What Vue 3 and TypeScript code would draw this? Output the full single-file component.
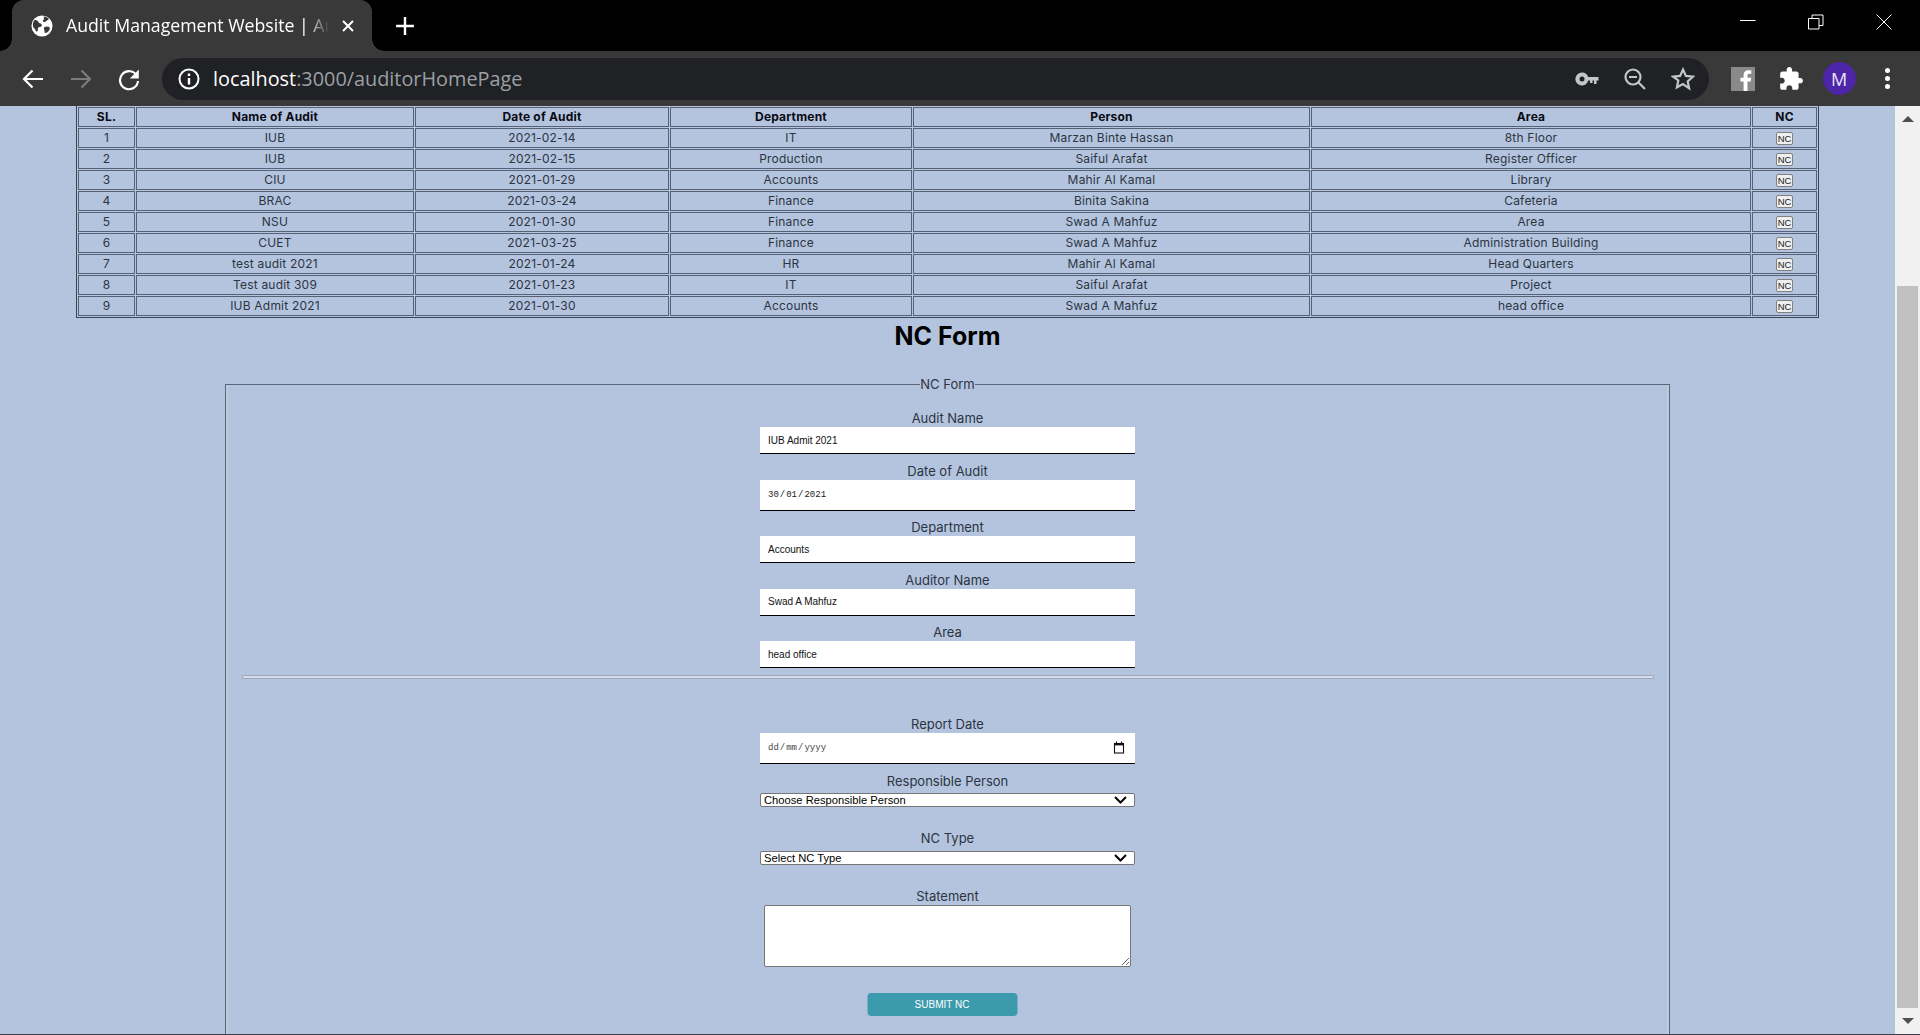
<template>
  <div class="window">
    <div class="tabstrip">
      <div class="tab">
        <svg class="favicon" viewBox="0 0 24 24">
          <circle cx="12" cy="12" r="11.5" fill="#fff" />
          <path fill="#38383a" d="M4 5.500c2 0 3.500.5 4 2s2.500 1 3.500 2.500-.5 3-2 3.200-2.200 1.300-2 3-1.500 2.500-2.200 1.200S4 14 2.500 13.500C1.500 10 2 7.500 4 5.500zM14 1.500c2 .3 4 1.200 5.500 2.800-.5 1.200-2 1.200-2.800 2.200s-2 1.500-3.200.8-.5-1.800.5-2.500-.5-1.500 0-3.300zM15 13c1.500-.8 3.500-.8 4.800.2s.7 2.800-.3 4-2.500 2.800-3.800 2.500-.7-2.200-1.200-3.500-.8-2.500.5-3.200z" />
        </svg>
        <span class="tab-title">Audit Management Website | Auditor Home</span>
        <svg class="tab-close" viewBox="0 0 14 14">
          <path d="M2 2l10 10M12 2L2 12" stroke="#fff" stroke-width="2" />
        </svg>
      </div>
      <svg class="new-tab" viewBox="0 0 18 18">
        <path d="M9 1v16M1 9h16" stroke="#fff" stroke-width="2.200" />
      </svg>
      <div class="win-controls">
        <div class="win-btn">
          <svg viewBox="0 0 16 16" width="16" height="16"><path d="M0 6.500h15.500" stroke="#fff" stroke-width="1" /></svg>
        </div>
        <div class="win-btn">
          <svg viewBox="0 0 16 16" width="16" height="16" fill="none" stroke="#fff">
            <path d="M.5 4.500h10.500v10.500H.5zM4 4.500V1h11v10.500h-4" />
          </svg>
        </div>
        <div class="win-btn">
          <svg viewBox="0 0 16 16" width="16" height="16"><path d="M.5.5l15 15M15.500.5l-15 15" stroke="#fff" /></svg>
        </div>
      </div>
    </div>

    <div class="toolbar">
      <div class="tool-btn">
        <svg viewBox="0 0 24 24" width="24" height="24" fill="none" stroke="#fff" stroke-width="2.200">
          <path d="M22 12H3M11.500 3.500L3 12l8.500 8.500" />
        </svg>
      </div>
      <div class="tool-btn">
        <svg viewBox="0 0 24 24" width="24" height="24" fill="none" stroke="#7b7b7b" stroke-width="2.200">
          <path d="M2 12h19M12.500 3.500L21 12l-8.500 8.500" />
        </svg>
      </div>
      <div class="tool-btn">
        <svg viewBox="0 0 24 24" width="24" height="24" fill="none" stroke="#fff" stroke-width="2.200">
          <path d="M20 9a9 9 0 1 0 1 5" />
          <path d="M21.800 2.500v9h-9z" fill="#fff" stroke="none" />
        </svg>
      </div>
      <div class="omnibox">
        <div class="tool-btn">
          <svg viewBox="0 0 24 24" width="24" height="24" fill="none" stroke="#fff" stroke-width="2">
            <circle cx="12" cy="12" r="9.500" />
            <path d="M12 11v6.500M12 6.500v2.500" stroke-width="2.400" />
          </svg>
        </div>
        <div class="url"><span class="url-host">localhost</span>:3000/auditorHomePage</div>
        <div class="tool-btn">
          <svg viewBox="0 0 24 24" width="24" height="24" fill="#c4c5c8">
            <path fill-rule="evenodd" d="M7 5.500a6.500 6.500 0 0 1 6.200 4.500H23.500v3.500h-2v3.500h-2.500v-3.500h-1.500v2.500H15v-2.500h-1.800A6.500 6.500 0 1 1 7 5.500zm0 4a2.500 2.500 0 1 0 0 5 2.500 2.500 0 0 0 0-5z" />
          </svg>
        </div>
        <div class="tool-btn">
          <svg viewBox="0 0 24 24" width="24" height="24" fill="none" stroke="#c4c5c8" stroke-width="2.200">
            <circle cx="10" cy="10" r="7.500" />
            <path d="M6 10h8M15.500 15.500L22 22" />
          </svg>
        </div>
        <div class="tool-btn">
          <svg viewBox="0 0 24 24" width="24" height="24" fill="none" stroke="#c4c5c8" stroke-width="2.200">
            <path d="M12 2.500l2.900 6.400 7 .8-5.200 4.700 1.400 6.900L12 17l-6.100 3.300 1.400-6.900L2.100 9.700l7-.8z" />
          </svg>
        </div>
      </div>
      <div class="extensions">
        <div class="tool-btn">
          <svg viewBox="0 0 24 24" width="24" height="24">
            <rect width="24" height="24" fill="#8a8a8a" />
            <path fill="#fff" d="M16.500 24v-9.500h3.200l.5-3.700h-3.700V8.500c0-1.100.3-1.800 1.800-1.800h2V3.400c-.4 0-1.500-.2-2.900-.2-2.900 0-4.800 1.700-4.800 4.900v2.700H9.400v3.700h3.200V24z" />
          </svg>
        </div>
        <div class="tool-btn">
          <svg viewBox="0 0 24 24" width="26" height="26" fill="#fff">
            <path d="M20.500 11H19V7c0-1.100-.9-2-2-2h-4V3.500C13 2.120 11.880 1 10.500 1S8 2.120 8 3.500V5H4c-1.100 0-1.990.9-1.990 2v3.800H3.500c1.490 0 2.700 1.210 2.700 2.700s-1.210 2.700-2.700 2.700H2V20c0 1.100.9 2 2 2h3.800v-1.500c0-1.490 1.210-2.700 2.700-2.700 1.490 0 2.700 1.210 2.700 2.700V22H17c1.100 0 2-.9 2-2v-4h1.500c1.380 0 2.500-1.120 2.500-2.500S21.880 11 20.500 11z" />
          </svg>
        </div>
        <div class="tool-btn">
          <div class="avatar">M</div>
        </div>
        <div class="tool-btn">
          <div class="dots"><i></i><i></i><i></i></div>
        </div>
      </div>
    </div>

    <div class="viewport">
      <main class="page">
        <table class="audit-table">
          <thead>
            <tr>
              <th v-for="h in headers" :key="h">{{ h }}</th>
            </tr>
          </thead>
          <tbody>
            <tr v-for="(row, i) in audits" :key="i">
              <td>{{ i + 1 }}</td>
              <td>{{ row.name }}</td>
              <td>{{ row.date }}</td>
              <td>{{ row.department }}</td>
              <td>{{ row.person }}</td>
              <td>{{ row.area }}</td>
              <td><button class="nc-btn" type="button">NC</button></td>
            </tr>
          </tbody>
        </table>

        <h2 class="form-title">NC Form</h2>

        <fieldset class="nc-fieldset">
          <legend>NC Form</legend>

          <div class="field">
            <label>Audit Name</label>
            <input class="text-input" type="text" readonly value="IUB Admit 2021" />
          </div>
          <div class="field">
            <label>Date of Audit</label>
            <div class="date-input">30<span class="sep">/</span>01<span class="sep">/</span>2021</div>
          </div>
          <div class="field">
            <label>Department</label>
            <input class="text-input" type="text" readonly value="Accounts" />
          </div>
          <div class="field">
            <label>Auditor Name</label>
            <input class="text-input" type="text" readonly value="Swad A Mahfuz" />
          </div>
          <div class="field">
            <label>Area</label>
            <input class="text-input" type="text" readonly value="head office" />
          </div>

          <hr class="divider" />

          <div class="field">
            <label>Report Date</label>
            <div class="date-input date-input--empty">
              dd<span class="sep">/</span>mm<span class="sep">/</span>yyyy
              <svg class="calendar" viewBox="0 0 12 13" width="12" height="13" fill="none" stroke="#111">
                <rect x="1.500" y="2.500" width="9" height="9.500" stroke-width="1.100" />
                <path d="M1.500 3.500h9" stroke-width="1.800" />
                <path d="M3.500 .5v2M8.500 .5v2" stroke-width="1.100" />
              </svg>
            </div>
          </div>
          <div class="field field--select">
            <label>Responsible Person</label>
            <div class="select-wrap">
              <select class="select-input">
                <option>Choose Responsible Person</option>
              </select>
              <svg class="chevron" viewBox="0 0 13 8" width="13" height="8" fill="none" stroke="#000" stroke-width="2">
                <path d="M1 1l5.500 5.500L12 1" />
              </svg>
            </div>
          </div>
          <div class="field field--select">
            <label>NC Type</label>
            <div class="select-wrap">
              <select class="select-input">
                <option>Select NC Type</option>
              </select>
              <svg class="chevron" viewBox="0 0 13 8" width="13" height="8" fill="none" stroke="#000" stroke-width="2">
                <path d="M1 1l5.500 5.500L12 1" />
              </svg>
            </div>
          </div>
          <div class="field">
            <label>Statement</label>
            <textarea class="statement"></textarea>
          </div>
          <button class="submit-btn" type="button">SUBMIT NC</button>
        </fieldset>
      </main>

      <div class="scrollbar">
        <div class="sb-arrow sb-arrow--up"></div>
        <div class="sb-track"><div class="sb-thumb"></div></div>
        <div class="sb-arrow sb-arrow--down"></div>
      </div>
    </div>
  </div>
</template>

<script setup lang="ts">
interface Audit {
  name: string
  date: string
  department: string
  person: string
  area: string
}

const headers = ['SL.', 'Name of Audit', 'Date of Audit', 'Department', 'Person', 'Area', 'NC']

const audits: Audit[] = [
  { name: 'IUB', date: '2021-02-14', department: 'IT', person: 'Marzan Binte Hassan', area: '8th Floor' },
  { name: 'IUB', date: '2021-02-15', department: 'Production', person: 'Saiful Arafat', area: 'Register Officer' },
  { name: 'CIU', date: '2021-01-29', department: 'Accounts', person: 'Mahir Al Kamal', area: 'Library' },
  { name: 'BRAC', date: '2021-03-24', department: 'Finance', person: 'Binita Sakina', area: 'Cafeteria' },
  { name: 'NSU', date: '2021-01-30', department: 'Finance', person: 'Swad A Mahfuz', area: 'Area' },
  { name: 'CUET', date: '2021-03-25', department: 'Finance', person: 'Swad A Mahfuz', area: 'Administration Building' },
  { name: 'test audit 2021', date: '2021-01-24', department: 'HR', person: 'Mahir Al Kamal', area: 'Head Quarters' },
  { name: 'Test audit 309', date: '2021-01-23', department: 'IT', person: 'Saiful Arafat', area: 'Project' },
  { name: 'IUB Admit 2021', date: '2021-01-30', department: 'Accounts', person: 'Swad A Mahfuz', area: 'head office' }
]
</script>

<style>
html,
body {
  margin: 0;
  height: 100%;
  overflow: hidden;
}
</style>

<style scoped>
.window {
  display: flex;
  flex-direction: column;
  height: 1035px;
  background: #000;
  font-family: Inter, "Liberation Sans", sans-serif;
}

/* browser chrome */
.tabstrip {
  display: flex;
  align-items: center;
  height: 51px;
  flex: none;
}

.tab {
  position: relative;
  display: flex;
  align-items: center;
  box-sizing: border-box;
  width: 360px;
  height: 51px;
  margin-left: 12px;
  padding: 0 17px 0 19px;
  background: #393939;
  border-radius: 12px 12px 0 0;
}

.tab::before,
.tab::after {
  content: "";
  position: absolute;
  bottom: 0;
  width: 12px;
  height: 12px;
}

.tab::before {
  left: -12px;
  background: radial-gradient(circle at 0 0, #000 11.500px, #393939 12px);
}

.tab::after {
  right: -12px;
  background: radial-gradient(circle at 100% 0, #000 11.500px, #393939 12px);
}

.favicon {
  width: 22px;
  height: 22px;
  flex: none;
}

.tab-title {
  flex: 1;
  margin-left: 13px;
  padding-bottom: 2px;
  overflow: hidden;
  white-space: nowrap;
  color: #fff;
  font-family: "Open Sans", sans-serif;
  font-size: 17.700px;
  -webkit-mask-image: linear-gradient(to right, #000 88%, transparent 97%);
  mask-image: linear-gradient(to right, #000 88%, transparent 97%);
}

.tab-close {
  width: 14px;
  height: 14px;
  flex: none;
  margin-left: 3px;
}

.new-tab {
  width: 20px;
  height: 20px;
  margin-left: 23px;
}

.win-controls {
  display: flex;
  margin-left: auto;
  margin-right: 2px;
  align-self: flex-start;
}

.win-btn {
  display: flex;
  justify-content: center;
  padding-top: 14px;
  width: 68px;
}

.toolbar {
  display: flex;
  align-items: center;
  flex: none;
  height: 55px;
  padding-left: 9px;
  background: #393939;
}

.tool-btn {
  display: flex;
  align-items: center;
  justify-content: center;
  flex: none;
  width: 48px;
  height: 42px;
}

.omnibox {
  display: flex;
  align-items: center;
  box-sizing: border-box;
  width: 1547px;
  height: 42px;
  margin-left: 9px;
  padding: 0 2px 0 3px;
  border-radius: 21px;
  background: #202124;
}

.url {
  flex: 1;
  color: #9aa0a6;
  font-family: "Open Sans", sans-serif;
  font-size: 19.850px;
}

.url-host {
  color: #fff;
}

.extensions {
  display: flex;
  margin-left: 10px;
}

.avatar {
  display: flex;
  align-items: center;
  justify-content: center;
  width: 33px;
  height: 33px;
  border-radius: 50%;
  background: #4d26a8;
  color: #e8e3f5;
  font-family: "Open Sans", sans-serif;
  font-size: 18px;
}

.dots {
  display: flex;
  flex-direction: column;
  gap: 3px;
}

.dots i {
  width: 5px;
  height: 5px;
  border-radius: 50%;
  background: #fff;
}

/* page */
.viewport {
  display: flex;
  flex: 1;
  min-height: 0;
  background: #b4c4de;
  border-bottom: 1px solid #3a3f4a;
}

.page {
  flex: 1;
  min-width: 0;
  overflow: hidden;
  color: #2c3442;
  font-size: 13px;
}

.audit-table {
  table-layout: fixed;
  width: 1743px;
  margin: -1px 0 0 76px;
  border: 1px solid #3a4558;
  border-collapse: separate;
  border-spacing: 1px;
  font-size: 12px;
  letter-spacing: 0.200px;
}

.audit-table th,
.audit-table td {
  box-sizing: border-box;
  height: 20px;
  padding: 0 0 1px;
  border: 1px solid #566176;
  text-align: center;
  font-weight: 400;
  white-space: nowrap;
}

.audit-table th {
  color: #0a0a14;
  font-weight: 700;
}

.audit-table th:nth-child(1) { width: 57px; }
.audit-table th:nth-child(2) { width: 278px; }
.audit-table th:nth-child(3) { width: 254px; }
.audit-table th:nth-child(4) { width: 242px; }
.audit-table th:nth-child(5) { width: 397px; }
.audit-table th:nth-child(6) { width: 440px; }
.audit-table th:nth-child(7) { width: 65px; }

.nc-btn {
  display: block;
  box-sizing: border-box;
  width: 17px;
  height: 13px;
  margin: 1px auto 0;
  padding: 0;
  border: 1px solid #808080;
  border-radius: 2px;
  background: #efefef;
  color: #222;
  font-family: "Liberation Sans", sans-serif;
  font-size: 9.500px;
  letter-spacing: 0;
  line-height: 11px;
}

.form-title {
  margin: 4px 0 0;
  height: 53px;
  color: #000;
  text-align: center;
  font-size: 25px;
  font-weight: 700;
  line-height: 29px;
}

.nc-fieldset {
  box-sizing: border-box;
  width: 1445px;
  margin: 0 auto;
  padding: 16px 15px 60px;
  border: 1px solid #5a6579;
  box-shadow: inset 2px 0 0 #c0cbe0, inset -2px 0 0 #c0cbe0;
}

.nc-fieldset legend {
  margin: 0 auto;
  padding: 0;
  font-size: 13px;
  line-height: 18px;
}

.field {
  display: flex;
  flex-direction: column;
  align-items: center;
  margin-bottom: 7.500px;
}

.field label {
  font-size: 13px;
  line-height: 18px;
}

.text-input {
  box-sizing: border-box;
  width: 375px;
  height: 27px;
  padding: 0 8px;
  border: 0;
  border-bottom: 1px solid #000;
  background: #fff;
  color: #111;
  font-family: "Liberation Sans", sans-serif;
  font-size: 10px;
  outline: none;
}

.date-input {
  position: relative;
  display: flex;
  align-items: center;
  box-sizing: border-box;
  width: 375px;
  height: 31px;
  padding: 0 8px;
  border-bottom: 1px solid #000;
  background: #fff;
  color: #222;
  font-family: "Liberation Mono", monospace;
  font-size: 9px;
}

.date-input--empty {
  color: #444;
}

.sep {
  margin: 0 1px;
}

.calendar {
  position: absolute;
  top: 8px;
  right: 10px;
}

.divider {
  box-sizing: border-box;
  width: 1412px;
  height: 4px;
  margin: -0.500px auto 36px;
  border: 1px solid #a0a9ba;
  background: #d5dbe6;
}

.field--select {
  margin-bottom: 22px;
}

.field--select label {
  margin-bottom: 3.500px;
}

.select-wrap {
  position: relative;
  display: flex;
}

.select-input {
  box-sizing: border-box;
  width: 375px;
  height: 14px;
  padding: 0 3px;
  border: 1px solid #767676;
  border-radius: 2px;
  background: #fff;
  color: #000;
  font-family: "Liberation Sans", sans-serif;
  font-size: 11.200px;
  line-height: 12px;
  appearance: none;
}

.chevron {
  position: absolute;
  top: 3px;
  right: 8px;
  pointer-events: none;
}

.statement {
  box-sizing: border-box;
  width: 367px;
  height: 62px;
  margin: 0;
  border: 1px solid #767676;
  border-radius: 2px;
  background: #fff;
}

.submit-btn {
  display: block;
  width: 150px;
  height: 23px;
  margin: 26px auto 0;
  border: 0;
  border-radius: 4px;
  background: #3c9aad;
  color: #fff;
  font-family: "Liberation Sans", sans-serif;
  font-size: 10px;
  transform: translateX(-5.500px);
}

/* scrollbar */
.scrollbar {
  display: flex;
  flex-direction: column;
  flex: none;
  width: 25px;
  background: #f1f1f1;
}

.sb-arrow {
  display: flex;
  align-items: center;
  justify-content: center;
  flex: none;
  height: 26px;
}

.sb-arrow::before {
  content: "";
  border-left: 6px solid transparent;
  border-right: 6px solid transparent;
}

.sb-arrow--up::before {
  border-bottom: 6px solid #505050;
}

.sb-arrow--down::before {
  border-top: 6px solid #505050;
}

.sb-track {
  display: flex;
  flex: 1;
  justify-content: center;
  padding-top: 154px;
}

.sb-thumb {
  width: 21px;
  background: #c1c1c1;
}
</style>
